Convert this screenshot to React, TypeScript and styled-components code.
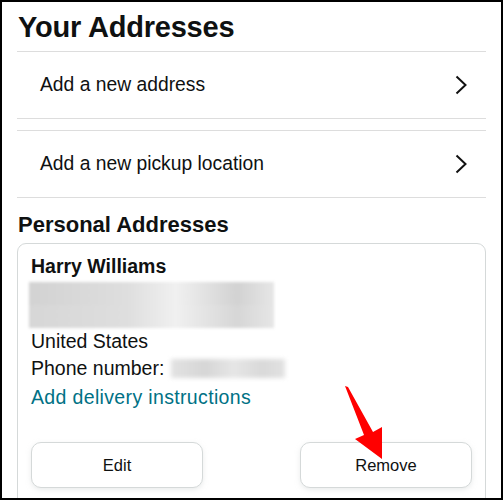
import styled, { createGlobalStyle } from "styled-components";

const GlobalStyle = createGlobalStyle`
  html, body {
    margin: 0;
    padding: 0;
    background: #fff;
  }
  body {
    font-family: "Liberation Sans", Arial, sans-serif;
    color: #0f1111;
  }
`;

const Frame = styled.div`
  position: relative;
  box-sizing: border-box;
  width: 503px;
  height: 500px;
  border: 2px solid #000;
  overflow: hidden;
  padding: 0 15px;
  background: #fff;
`;

const Title = styled.h1`
  margin: 0;
  padding: 7px 0 0 1px;
  height: 50px;
  box-sizing: border-box;
  font-size: 29px;
  font-weight: 700;
  letter-spacing: -0.2px;
  line-height: 36px;
  border-bottom: 1px solid #dddddd;
`;

const LinkGroup = styled.div`
  border-bottom: 1px solid #dddddd;
  & + & {
    margin-top: 11px;
    border-top: 1px solid #dddddd;
  }
`;

const LinkRow = styled.div`
  display: flex;
  align-items: center;
  justify-content: space-between;
  height: 66px;
  padding: 0 18px 0 23px;
  font-size: 19.3px;
`;

const Chevron = () => (
  <svg width="14" height="20" viewBox="0 0 14 20">
    <path d="M2.5 1.5 L11.5 10 L2.5 18.5" fill="none" stroke="#111" strokeWidth="2" />
  </svg>
);

const SectionTitle = styled.h2`
  margin: 0;
  padding: 13px 0 0 1px;
  height: 45px;
  box-sizing: border-box;
  font-size: 22px;
  font-weight: 700;
  line-height: 28px;
`;

const Card = styled.div`
  border: 1px solid #d5d9d9;
  border-radius: 9px;
  padding: 11px 13px 20px 13px;
`;

const Name = styled.div`
  font-size: 19.5px;
  font-weight: 700;
  line-height: 22px;
`;

const Blur = styled.div<{ $w: number; $h: number }>`
  width: ${p => p.$w}px;
  height: ${p => p.$h}px;
  background: linear-gradient(90deg, #e2e2e2, #d6d6d6 30%, #e6e6e6 55%, #d9d9d9 80%, #e2e2e2);
  filter: blur(2px);
`;

const AddressBlock = styled.div`
  margin: 5px 0 0 -2px;
  display: flex;
  flex-direction: column;
  width: 245px;
  height: 46px;
  background: #ebebeb;
  filter: blur(1.5px);
`;

const BlurRow = styled.div<{ $dark: string }>`
  flex: 1;
  background: linear-gradient(90deg, ${p => p.$dark}, #dedede 40%, #f0f0f0 60%, ${p => p.$dark} 85%, #e6e6e6);
`;

const Line = styled.div`
  font-size: 19.5px;
  line-height: 27px;
  display: flex;
  align-items: center;
  gap: 7px;
`;

const TealLink = styled(Line)`
  color: #007185;
  margin-top: 2px;
  letter-spacing: 0.35px;
`;

const Buttons = styled.div`
  display: flex;
  justify-content: space-between;
  margin-top: 31px;
`;

const Button = styled.button`
  box-sizing: border-box;
  width: 172px;
  height: 46px;
  border: 1px solid #d5d9d9;
  border-radius: 10px;
  background: #fff;
  box-shadow: 0 2px 5px rgba(213, 217, 217, 0.5);
  font-family: "Liberation Sans", Arial, sans-serif;
  font-size: 16.5px;
  color: #0f1111;
  padding-top: 2px;
`;

const Arrow = styled.svg`
  position: absolute;
  left: 330px;
  top: 375px;
`;

export default function App() {
  return (
    <>
      <GlobalStyle />
      <Frame>
        <Title>Your Addresses</Title>
        <LinkGroup>
          <LinkRow>
            Add a new address
            <Chevron />
          </LinkRow>
        </LinkGroup>
        <LinkGroup>
          <LinkRow>
            Add a new pickup location
            <Chevron />
          </LinkRow>
        </LinkGroup>
        <SectionTitle>Personal Addresses</SectionTitle>
        <Card>
          <Name>Harry Williams</Name>
          <AddressBlock>
            <BlurRow $dark="#d2d2d2" />
            <BlurRow $dark="#d6d6d6" />
          </AddressBlock>
          <Line>United States</Line>
          <Line>
            Phone number: <Blur $w={114} $h={19} />
          </Line>
          <TealLink>Add delivery instructions</TealLink>
          <Buttons>
            <Button>Edit</Button>
            <Button>Remove</Button>
          </Buttons>
        </Card>
        {/* red callout arrow, coordinates local to (330,375) */}
        <Arrow width="60" height="90" viewBox="0 0 60 90">
          <path
            d="M13 9 L16 10 L41 55 L50 50 L50 82 L23 62 L32 58 Z"
            fill="#ff0000"
          />
        </Arrow>
      </Frame>
    </>
  );
}
